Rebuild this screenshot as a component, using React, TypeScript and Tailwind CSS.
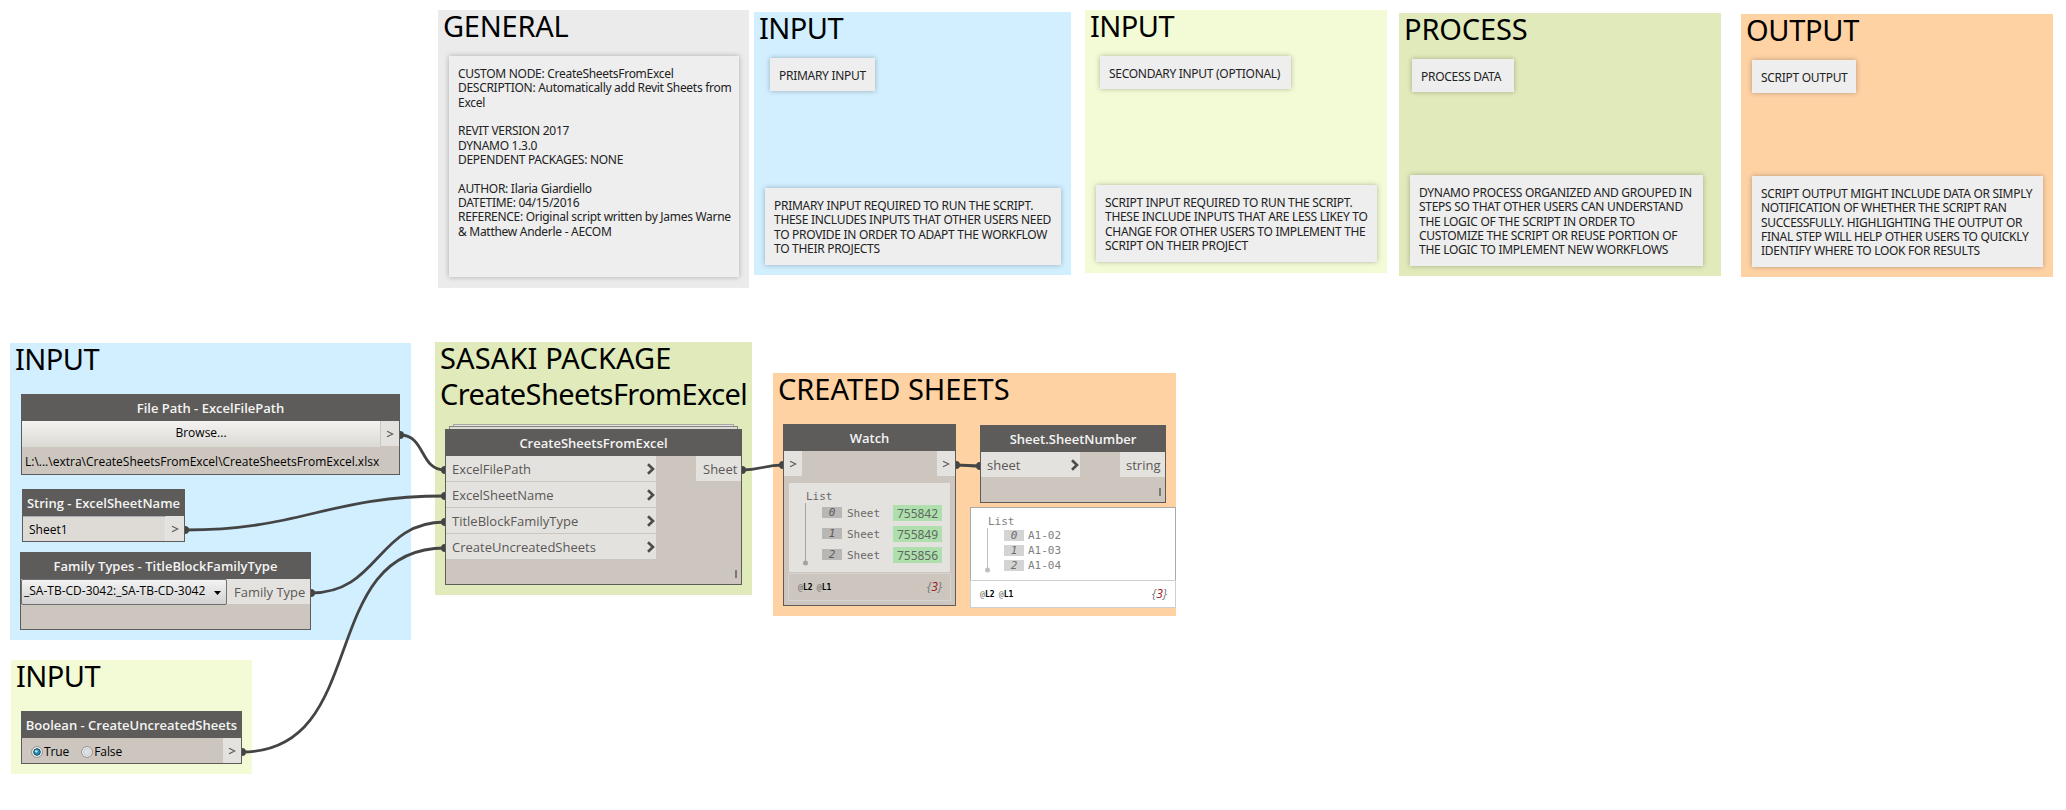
import { type ReactNode } from "react";
import { clsx } from "clsx";

function Group({ className, title }: { className: string; title: ReactNode }) {
  return (
    <section className={clsx("absolute px-[5px]", className)}>
      <h2 className="-mt-[2px] whitespace-pre text-[29px] leading-[36px] text-black">{title}</h2>
    </section>
  );
}

function Note({ className, lines }: { className: string; lines: string[] }) {
  return (
    <div className={clsx("absolute bg-[#eeeeee] px-[9px] pt-[11px] text-[12px] leading-[14.33px] tracking-[-0.29px] text-[#222222] shadow-[0_0_5px_rgba(0,0,0,0.28)]", className)}>
      {lines.map((line, i) => (
        <p key={i} className="h-[14.33px] whitespace-nowrap">
          {line}
        </p>
      ))}
    </div>
  );
}

function Node({ className, title, children }: { className: string; title: string; children: ReactNode }) {
  return (
    <article className={clsx("absolute flex flex-col border border-[#5e5c5a] bg-[#ccc6bf] font-['Open_Sans',sans-serif]", className)}>
      <header className="flex h-[26px] shrink-0 items-center justify-center whitespace-nowrap bg-[#5e5c5a] pt-[2px] text-[13px] font-semibold text-[#f4f4f4]">
        {title}
      </header>
      {children}
    </article>
  );
}

function Port({ className, children }: { className?: string; children: ReactNode }) {
  return (
    <div className={clsx("flex h-[25px] items-center whitespace-nowrap bg-[#e4e2df] pt-[3px] text-[13px] text-[#5a5856]", className)}>
      {children}
    </div>
  );
}

function ArrowPort() {
  return (
    <div className="flex h-[25px] w-[18px] items-center justify-center bg-[#e4e2df] pt-[1px]">
      <svg width="8" height="8" viewBox="0 0 8 8" fill="none" stroke="#5a5856" strokeWidth="1.1">
        <path d="M1 1.2 6.8 4 1 6.8" />
      </svg>
    </div>
  );
}

function Chevron() {
  return (
    <svg width="10" height="12" viewBox="0 0 10 12" fill="none" stroke="#4c4b4a" strokeWidth="2.6" className="ml-auto -mt-[2px]">
      <path d="M2 1.2 7 6 2 10.8" />
    </svg>
  );
}

function Lacing() {
  return <i className="mb-[6px] ml-auto mr-[4px] mt-auto h-[8px] w-[2px] bg-[#7b7875]" />;
}

function IndexTag({ children, className }: { children: ReactNode; className: string }) {
  return (
    <span className={clsx("flex h-[11px] w-[20px] items-center justify-center text-[11px] italic leading-none", className)}>{children}</span>
  );
}

function Levels({ className }: { className?: string }) {
  return (
    <div className={clsx("flex items-center justify-between", className)}>
      <span className="flex gap-[4px] pt-[1px] font-['DejaVu_Sans_Mono',monospace] text-[8px] tracking-[0.1px] text-[#666]">
        <span>@<b className="text-black">L2</b></span>
        <span>@<b className="text-black">L1</b></span>
      </span>
      <span className="font-['Open_Sans',sans-serif] text-[12px] italic text-[#777]">
        {"{"}<span className="text-[#a01018]">3</span>{"}"}
      </span>
    </div>
  );
}

function Stem({ className, height }: { className: string; height: number }) {
  return (
    <svg width="6" height={height} className={className} fill="currentColor">
      <rect x="2" y="0" width="1" height={height - 3} />
      <circle cx="2.5" cy={height - 3} r="2.5" />
    </svg>
  );
}

const wires: [number, number, number, number][] = [
  [400, 435, 445, 470],
  [185, 530, 445, 496],
  [311, 593, 445, 522],
  [242, 752, 445, 548],
  [742, 470, 783, 465],
  [956, 465, 980, 466],
];

function Wires() {
  return (
    <svg className="absolute inset-0" width="2066" height="810" fill="none" stroke="#444444" strokeWidth="2.8">
      {wires.map(([x1, y1, x2, y2], i) => {
        const off = 0.45 * Math.hypot(x2 - x1, y2 - y1);
        return (
          <g key={i}>
            <path d={`M${x1} ${y1}C${x1 + off} ${y1} ${x2 - off} ${y2} ${x2} ${y2}`} />
            <circle cx={x1} cy={y1} r="4" fill="#444444" stroke="none" />
            <circle cx={x2} cy={y2} r="4" fill="#444444" stroke="none" />
          </g>
        );
      })}
    </svg>
  );
}

function Radio({ checked, label }: { checked?: boolean; label: string }) {
  return (
    <span className="flex items-center gap-[1px]">
      <svg width="12" height="12" viewBox="0 0 12 12">
        <circle cx="6" cy="6" r="5.4" fill="#f4f4f4" stroke="#8e8f8f" />
        {checked ? (
          <>
            <circle cx="6" cy="6" r="3.3" fill="#2a8fb5" stroke="#12445c" />
            <circle cx="5.2" cy="5.2" r="1.3" fill="#a6e4f7" />
          </>
        ) : (
          <circle cx="6" cy="6" r="3.6" fill="#dcdfe3" stroke="#c3c7cc" strokeWidth="0.8" />
        )}
      </svg>
      <span className="tracking-[-0.1px]">{label}</span>
    </span>
  );
}

const watched = ["755842", "755849", "755856"];
const sheetNumbers = ["A1-02", "A1-03", "A1-04"];
const inputs = ["ExcelFilePath", "ExcelSheetName", "TitleBlockFamilyType", "CreateUncreatedSheets"];

export default function App() {
  return (
    <main className="relative h-[810px] w-[2066px] overflow-hidden bg-white font-['Noto_Sans',sans-serif]">
      <Group className="left-[438px] top-[10px] h-[278px] w-[311px] bg-[#ebebeb] tracking-[-0.25px]" title="GENERAL" />
      <Group className="left-[754px] top-[12px] h-[263px] w-[317px] bg-[#d1efff] tracking-[-0.55px]" title="INPUT" />
      <Group className="left-[1085px] top-[10px] h-[263px] w-[302px] bg-[#f3fbd6] tracking-[-0.55px]" title="INPUT" />
      <Group className="left-[1399px] top-[13px] h-[263px] w-[322px] bg-[#e1eaba] tracking-[-0.15px]" title="PROCESS" />
      <Group className="left-[1741px] top-[14px] h-[263px] w-[312px] bg-[#ffd2a4] tracking-[-0.3px]" title="OUTPUT" />
      <Group className="left-[10px] top-[343px] h-[297px] w-[401px] bg-[#d1efff] tracking-[-0.55px]" title="INPUT" />
      <Group className="left-[11px] top-[660px] h-[114px] w-[241px] bg-[#f3fbd6] tracking-[-0.55px]" title="INPUT" />
      <Group
        className="left-[435px] top-[342px] h-[253px] w-[317px] bg-[#e1eaba] tracking-[0.13px]"
        title={<>SASAKI PACKAGE<br /><span className="tracking-[-0.6px]">CreateSheetsFromExcel</span></>}
      />
      <Group className="left-[773px] top-[373px] h-[243px] w-[403px] bg-[#ffd2a4]" title="CREATED SHEETS" />

      <Note className="left-[449px] top-[56px] h-[221px] w-[290px]" lines={["CUSTOM NODE: CreateSheetsFromExcel", "DESCRIPTION: Automatically add Revit Sheets from", "Excel", "", "REVIT VERSION 2017", "DYNAMO 1.3.0", "DEPENDENT PACKAGES: NONE", "", "AUTHOR: Ilaria Giardiello", "DATETIME: 04/15/2016", "REFERENCE: Original script written by James Warne", "& Matthew Anderle - AECOM"]} />
      <Note className="left-[770px] top-[58px] h-[33px] w-[105px]" lines={["PRIMARY INPUT"]} />
      <Note className="left-[765px] top-[188px] h-[77px] w-[296px]" lines={["PRIMARY INPUT REQUIRED TO RUN THE SCRIPT.", "THESE INCLUDES INPUTS THAT OTHER USERS NEED", "TO PROVIDE IN ORDER TO ADAPT THE WORKFLOW", "TO THEIR PROJECTS"]} />
      <Note className="left-[1100px] top-[56px] h-[33px] w-[191px]" lines={["SECONDARY INPUT (OPTIONAL)"]} />
      <Note className="left-[1096px] top-[185px] h-[77px] w-[281px]" lines={["SCRIPT INPUT REQUIRED TO RUN THE SCRIPT.", "THESE INCLUDE INPUTS THAT ARE LESS LIKEY TO", "CHANGE FOR OTHER USERS TO IMPLEMENT THE", "SCRIPT ON THEIR PROJECT"]} />
      <Note className="left-[1412px] top-[59px] h-[33px] w-[102px]" lines={["PROCESS DATA"]} />
      <Note className="left-[1410px] top-[175px] h-[91px] w-[293px]" lines={["DYNAMO PROCESS ORGANIZED AND GROUPED IN", "STEPS SO THAT OTHER USERS CAN UNDERSTAND", "THE LOGIC OF THE SCRIPT IN ORDER TO", "CUSTOMIZE THE SCRIPT OR REUSE PORTION OF", "THE LOGIC TO IMPLEMENT NEW WORKFLOWS"]} />
      <Note className="left-[1752px] top-[60px] h-[33px] w-[104px]" lines={["SCRIPT OUTPUT"]} />
      <Note className="left-[1752px] top-[176px] h-[91px] w-[291px]" lines={["SCRIPT OUTPUT MIGHT INCLUDE DATA OR SIMPLY", "NOTIFICATION OF WHETHER THE SCRIPT RAN", "SUCCESSFULLY. HIGHLIGHTING THE OUTPUT OR", "FINAL STEP WILL HELP OTHER USERS TO QUICKLY", "IDENTIFY WHERE TO LOOK FOR RESULTS"]} />

      <Wires />

      <Node className="left-[21px] top-[394px] h-[81px] w-[379px]" title="File Path - ExcelFilePath">
        <div className="flex">
          <button className="mr-[1px] h-[26px] flex-1 bg-linear-to-b from-[#f4f3f1] to-[#dbd9d4] pb-[2px] text-[12px] text-black">Browse...</button>
          <ArrowPort />
        </div>
        <p className="whitespace-nowrap pl-[3px] pt-[6px] text-[12px] leading-[18px] text-black">L:\...\extra\CreateSheetsFromExcel\CreateSheetsFromExcel.xlsx</p>
      </Node>

      <Node className="left-[22px] top-[489px] h-[53px] w-[163px]" title="String - ExcelSheetName">
        <div className="flex">
          <div className="h-[25px] flex-1 border-r border-t border-r-[#e3e9ef] border-t-[#abadb3] bg-[#dedbd7] pl-[6px] pt-[4px] text-[12px] leading-[18px] text-black">Sheet1</div>
          <ArrowPort />
        </div>
      </Node>

      <Node className="left-[20px] top-[552px] h-[78px] w-[291px]" title="Family Types - TitleBlockFamilyType">
        <div className="flex">
          <div className="flex h-[26px] w-[206px] items-center justify-between whitespace-nowrap rounded-[2px] border border-[#707070] bg-linear-to-b from-[#f3f3f3] to-[#d2d2d2] pb-[2px] pl-[2px] pr-[5px] text-[12px] text-black">
            _SA-TB-CD-3042:_SA-TB-CD-3042
            <svg width="7" height="4" className="mt-[4px]"><path d="M0 0h7L3.5 4z" /></svg>
          </div>
          <Port className="flex-1 pl-[7px]">Family Type</Port>
        </div>
      </Node>

      <Node className="left-[21px] top-[711px] h-[53px] w-[221px]" title="Boolean - CreateUncreatedSheets">
        <div className="flex items-center">
          <div className="flex flex-1 gap-[12px] pl-[9px] pt-[2px] text-[12px] text-black">
            <Radio checked label="True" />
            <Radio label="False" />
          </div>
          <ArrowPort />
        </div>
      </Node>

      <i className="absolute left-[453px] top-[424px] h-[6px] w-[281px] border border-[#a5a7a0] bg-[#e4e2df]" />
      <i className="absolute left-[449px] top-[426px] h-[6px] w-[289px] border border-[#858581] bg-[#dddbd6]" />
      <Node className="left-[445px] top-[429px] h-[156px] w-[297px]" title="CreateSheetsFromExcel">
        <div className="flex items-start justify-between">
          <div className="flex w-[210px] flex-col gap-[1px]">
            {inputs.map((name) => (
              <Port key={name} className="pl-[6px]">{name}<Chevron /></Port>
            ))}
          </div>
          <Port className="w-[45px] pl-[7px]">Sheet</Port>
        </div>
        <Lacing />
      </Node>

      <Node className="left-[783px] top-[424px] h-[182px] w-[173px]" title="Watch">
        <div className="flex justify-between"><ArrowPort /><ArrowPort /></div>
        <div className="mx-[5px] mt-[7px] h-[89px] bg-[#e4e2df] pl-[14px] pt-[5px] font-['DejaVu_Sans_Mono',monospace] text-[11px] text-[#6b6967]">
          <p className="h-[15px] pl-[3px] leading-[17px]">List</p>
          <div className="flex">
            <Stem className="text-[#a5a3a1]" height={63} />
            <ul className="flex flex-col gap-[5px] pt-[2px]">
              {watched.map((id, i) => (
                <li key={id} className="flex h-[16px] items-center pl-[13px]">
                  <IndexTag className="mb-[1px] bg-[#b9b7b5] text-[#5c5a58]">{i}</IndexTag>
                  <span className="ml-[5px] w-[46px] pt-[2px]">Sheet</span>
                  <span className="flex h-[16px] w-[49px] items-center justify-center bg-[#b0dfae] pt-[2px] font-['Noto_Sans',sans-serif] text-[12px] text-[#5c6b5e]">{id}</span>
                </li>
              ))}
            </ul>
          </div>
        </div>
        <Levels className="mx-[4px] mt-[1px] h-[28px] border border-[#d4d4d4] pl-[9px] pr-[8px]" />
      </Node>

      <Node className="left-[980px] top-[425px] h-[78px] w-[186px]" title="Sheet.SheetNumber">
        <div className="flex justify-between">
          <Port className="w-[99px] pl-[6px]">sheet<Chevron /></Port>
          <Port className="w-[45px] pl-[6px]">string</Port>
        </div>
        <Lacing />
      </Node>

      <div className="absolute left-[970px] top-[507px] flex h-[101px] w-[206px] flex-col border border-[#a9a9a9] bg-white font-['DejaVu_Sans_Mono',monospace] text-[11px] text-[#808080]">
        <div className="h-[72px] pl-[14px] pt-[5px]">
          <p className="h-[15px] pl-[3px] leading-[17px]">List</p>
          <div className="flex">
            <Stem className="text-[#c0c0c0]" height={45} />
            <ul className="flex flex-col gap-[4px] pt-[2px]">
              {sheetNumbers.map((name, i) => (
                <li key={name} className="flex h-[11px] items-center pl-[13px]">
                  <IndexTag className="bg-[#d4d4d4] text-[#6e6e6e]">{i}</IndexTag>
                  <span className="ml-[4px] pt-[2px]">{name}</span>
                </li>
              ))}
            </ul>
          </div>
        </div>
        <Levels className="-mx-px -mb-px flex-1 border border-[#cfcfcf] pl-[9px] pr-[8px]" />
      </div>
    </main>
  );
}
